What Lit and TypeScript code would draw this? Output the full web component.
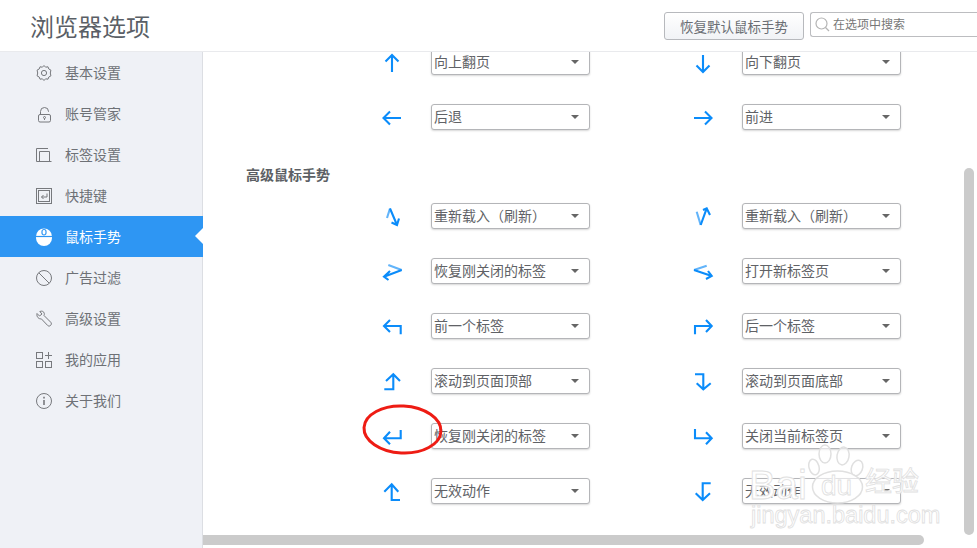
import { LitElement, html, css, svg } from "lit";
import { customElement } from "lit/decorators.js";

const NAV = [
  ["基本设置", svg`<path d="M8 1.500 9.600 3.200 12 2.800 12.800 5 14.900 6.100 14.300 9 14.900 11.900 12.800 13 12 15.200 9.600 14.800 8 16.500 6.400 14.800 4 15.200 3.200 13 1.100 11.900 1.700 9 1.100 6.100 3.200 5 4 2.800 6.400 3.200Z"/><circle cx="8" cy="9" r="2.600"/>`],
  ["账号管家", svg`<rect x="2.500" y="9.500" width="12" height="7.500" rx="1.500"/><path d="M4.500 9.500V6.500a4 4 0 0 1 8 0V7"/><circle cx="8.500" cy="12.500" r="1"/><path d="M8.500 13.500v1.500"/>`],
  ["标签设置", svg`<path d="M.5 15.500V2.500H12"/><path d="M3.500 15.500V5.500H13.500V15.500M.5 15.500H15.500"/>`],
  ["快捷键", svg`<rect x=".5" y="1.500" width="15" height="15"/><rect x="2.500" y="3.500" width="11" height="11"/><path d="M11 6.500V10H5.500M7.500 8 5.500 10 7.500 12"/>`],
  ["鼠标手势", svg`<rect class="fill" x="0" y=".5" width="16" height="17.500" rx="8"/><path class="cut" d="M0 8.500H16"/><rect class="fill cut" x="6" y="1.500" width="4" height="5.500" rx="2"/>`],
  ["广告过滤", svg`<circle cx="8" cy="9" r="7.500"/><path d="M2.800 3.800 13.200 14.200"/>`],
  ["高级设置", svg`<path d="M1 3.500 3.500 6 6 4 3.800 1.500C5.800.6 8 1.400 8.300 3.500 8.400 4.300 8.300 5 8 5.500L14.800 12.300C15.800 13.300 15.300 14.800 14.500 15.500 13.700 16.200 12.500 16.300 11.700 15.500L5.300 8.800C3 9.300.3 7 1 3.500Z"/>`],
  ["我的应用", svg`<rect x=".5" y="1.500" width="6" height="6"/><rect x=".5" y="10.500" width="6" height="6"/><rect x="9.500" y="10.500" width="6" height="6"/><path d="M12.500 1V8M9 4.500H16"/>`],
  ["关于我们", svg`<circle cx="8" cy="9" r="7.500"/><path d="M8 8V13" stroke-width="1.600"/><path d="M8 4.800V6.400" stroke-width="1.600"/>`],
];

type Cell = { d: string; light?: string; label: string };

const TOP: Cell[][] = [
  [
    { d: "M12 5V22M5.500 11.500 12 5 18.500 11.500", label: "向上翻页" },
    { d: "M12 5V22M5.500 15.500 12 22 18.500 15.500", label: "向下翻页" },
  ],
  [
    { d: "M21 13H4M10 6.500 3.500 13 10 19.500", label: "后退" },
    { d: "M3 13H20M14 6.500 20.500 13 14 19.500", label: "前进" },
  ],
];

const ADV: Cell[][] = [
  [
    { light: "M7 14 10 4.500", d: "M10 4.500 17 21M11.500 18.500 17 21 19 14.500", label: "重新载入（刷新）" },
    { light: "M5.700 7.700 9.700 21", d: "M9.700 21 15.700 4.300M12 6 15.700 4.300 19 11", label: "重新载入（刷新）" },
  ],
  [
    { light: "M8.300 6 21.700 11", d: "M21.700 11 4 17.700M10 12 4 17.700 8.500 21", label: "恢复刚关闭的标签" },
    { light: "M15.700 6.700 3 11", d: "M3 11 20.700 17M17 12 20.700 17 15 20", label: "打开新标签页" },
  ],
  [
    { d: "M20.700 20.300V12H4M10 6 4 12 10 18", label: "前一个标签" },
    { d: "M4 20.300V12H20.700M15 6 20.700 12 15 18", label: "后一个标签" },
  ],
  [
    { d: "M4.300 20.300H13.300V5.300M6 12 13.300 5.300 20 12", label: "滚动到页面顶部" },
    { d: "M4 5.300H12.300V20.300M5.700 14.300 12.300 20.300 19.700 14.300", label: "滚动到页面底部" },
  ],
  [
    { d: "M20.700 6V14.300H4M10 7.700 4 14.300 10 20.300", label: "恢复刚关闭的标签" },
    { d: "M4 5V14.300H20.700M15 8.300 20.700 14.300 15 20.300", label: "关闭当前标签页" },
  ],
  [
    { d: "M20 21H11.700V5.300M4.300 12.700 11.700 5.300 18.300 12.700", label: "无效动作" },
    { d: "M19.700 4.300H11.700V21M4.700 14.300 11.700 21 19 14.300", label: "无效动作" },
  ],
];

@customElement("app-root")
export class AppRoot extends LitElement {
  static styles = css`
    :host {
      display: flex;
      flex-direction: column;
      width: 100%;
      height: 100vh;
      overflow: hidden;
      position: relative;
      background: #fff;
      font-family: "Noto Sans CJK SC", "Noto Sans", sans-serif;
      color: #666;
    }
    .header {
      flex: none;
      height: 51px;
      border-bottom: 1px solid #e9eaed;
      display: flex;
      align-items: flex-start;
      padding-left: 30px;
      position: relative;
      z-index: 2;
      background: #fff;
    }
    .title {
      font-size: 24px;
      line-height: 52px;
      color: #5a5f66;
    }
    .reset {
      margin: 12px 0 0 auto;
      width: 140px;
      height: 28px;
      box-sizing: border-box;
      border: 1px solid #b7b9bd;
      border-radius: 3px;
      background: linear-gradient(#ffffff, #f1f3f6);
      font-size: 13.5px;
      line-height: 26px;
      text-align: center;
      color: #6a6e74;
    }
    .search {
      margin: 12px 0 0 6px;
      width: 167px;
      height: 25px;
      box-sizing: border-box;
      border: 1px solid #bcbdc0;
      border-right: none;
      border-radius: 3px 0 0 3px;
      display: flex;
      align-items: center;
      padding-left: 4px;
      gap: 3px;
      font-size: 12px;
      color: #777;
    }
    .search span { padding-bottom: 2px; }
    .search svg { fill: none; stroke: #b4b4b4; stroke-width: 1.200; }
    .body { flex: 1; display: flex; min-height: 0; }
    .side {
      flex: none;
      width: 202px;
      background: #eff1f6;
      border-right: 1px solid #dcdee3;
    }
    .nav {
      height: 41px;
      display: flex;
      align-items: center;
      padding-left: 36px;
      gap: 13px;
      font-size: 14px;
      color: #6e7176;
      position: relative;
    }
    .nav span { padding-bottom: 2px; }
    .nav svg { fill: none; stroke: #77797d; stroke-width: 1; flex: none; }
    .nav.on {
      background: #2e96f3;
      color: #fff;
      margin-right: -1px;
    }
    .nav.on svg { stroke: none; }
    .nav.on .fill { fill: #fff; }
    .nav.on .cut { stroke: #2e96f3; stroke-width: 1.200; }
    .nav.on::after {
      content: "";
      position: absolute;
      right: 0;
      top: 12px;
      border: 8px solid transparent;
      border-left: none;
      border-right-color: #fff;
    }
    .main { flex: 1; min-width: 0; overflow: hidden; }
    .inner { margin-top: -3px; }
    .grid {
      display: grid;
      grid-template-columns: 311px 311px;
      row-gap: 29px;
      padding-left: 177px;
    }
    .cell { display: flex; align-items: center; height: 26px; gap: 27px; }
    .cell svg { flex: none; fill: none; stroke: #0b8cfa; stroke-width: 2.100; }
    .cell svg .light { stroke: #62b4fa; }
    .select {
      width: 159px;
      height: 26px;
      box-sizing: border-box;
      border: 1px solid #b4b5b8;
      border-radius: 3px;
      box-shadow: 0 1px 2px rgba(0, 0, 0, 0.16);
      background: #fff;
      padding-left: 2px;
      display: flex;
      align-items: center;
      justify-content: space-between;
      font-size: 14px;
      color: #606266;
    }
    .select span { padding-bottom: 2px; }
    .select::after {
      content: "";
      margin-right: 10px;
      border: 4px solid transparent;
      border-bottom: none;
      border-top-color: #666;
    }
    .heading {
      margin: 34px 0 19px 43px;
      font-size: 14px;
      line-height: 20px;
      font-weight: 700;
      color: #5c5f64;
    }
    .vbar {
      position: absolute;
      right: 3px;
      top: 168px;
      width: 10px;
      height: 367px;
      border-radius: 5px;
      background: #cbcbcb;
    }
    .hbar {
      position: absolute;
      left: 203px;
      bottom: 3px;
      width: 721px;
      height: 10px;
      border-radius: 0 5px 5px 0;
      background: #cbcbcb;
    }
    .ring {
      position: absolute;
      left: 360px;
      top: 402px;
      fill: none;
      stroke: #ee1c14;
      stroke-width: 3;
    }
    .paw {
      position: absolute;
      left: 808px;
      top: 442px;
      fill: rgba(255, 255, 255, 0.6);
      stroke: #e0e0e0;
      stroke-width: 1.500;
    }
    .wm {
      position: absolute;
      color: rgba(255, 255, 255, 0.8);
      -webkit-text-stroke: 0.8px #e0e0e0;
      text-shadow: 0 0 2px #fff;
      font-family: "Liberation Sans", sans-serif;
      line-height: 1;
      white-space: nowrap;
    }
    .wm.bai { left: 749px; top: 465px; font-size: 40px; }
    .wm.du { left: 821px; top: 472px; font-size: 28px; }
    .wm.cn { left: 865px; top: 466px; font-size: 27px; font-family: "Noto Sans CJK SC", sans-serif; }
    .wm.url { left: 751px; top: 504px; font-size: 23.500px; }
  `;

  private cell(c: Cell) {
    return html`<div class="cell">
      <svg width="24" height="24" viewBox="0 0 24 24">
        ${c.light ? svg`<path class="light" d=${c.light}></path>` : ""}
        <path d=${c.d}></path>
      </svg>
      <div class="select"><span>${c.label}</span></div>
    </div>`;
  }

  render() {
    return html`
      <div class="header">
        <div class="title">浏览器选项</div>
        <div class="reset">恢复默认鼠标手势</div>
        <div class="search">
          <svg width="15" height="15" viewBox="0 0 15 15"><circle cx="6.500" cy="6.500" r="5.500"></circle><path d="M10.500 10.500 14 14"></path></svg>
          <span>在选项中搜索</span>
        </div>
      </div>
      <div class="body">
        <div class="side">
          ${NAV.map(
            ([label, icon], i) => html`<div class="nav ${i === 4 ? "on" : ""}">
              <svg width="16" height="18" viewBox="0 0 16 18">${icon}</svg>
              <span>${label}</span>
            </div>`
          )}
        </div>
        <div class="main">
          <div class="inner">
            <div class="grid">${TOP.flat().map((c) => this.cell(c))}</div>
            <div class="heading">高级鼠标手势</div>
            <div class="grid">${ADV.flat().map((c) => this.cell(c))}</div>
          </div>
        </div>
      </div>
      <div class="vbar"></div>
      <div class="hbar"></div>
      <svg class="ring" width="84" height="54" viewBox="0 0 84 54"><ellipse cx="42.500" cy="27.500" rx="38.500" ry="23.500" transform="rotate(3 42 27)"></ellipse></svg>
      <svg class="paw" width="60" height="66" viewBox="0 0 60 66">
        <ellipse cx="6" cy="25" rx="5" ry="8" transform="rotate(-15 6 25)"></ellipse>
        <ellipse cx="17" cy="12" rx="6" ry="9"></ellipse>
        <ellipse cx="35" cy="14" rx="6" ry="9" transform="rotate(10 35 14)"></ellipse>
        <ellipse cx="49" cy="26" rx="5.500" ry="8" transform="rotate(20 49 26)"></ellipse>
        <ellipse cx="29.500" cy="45" rx="25" ry="16"></ellipse>
      </svg>
      <div class="wm bai">Bai</div>
      <div class="wm du">du</div>
      <div class="wm cn">经验</div>
      <div class="wm url">jingyan.baidu.com</div>
    `;
  }
}
